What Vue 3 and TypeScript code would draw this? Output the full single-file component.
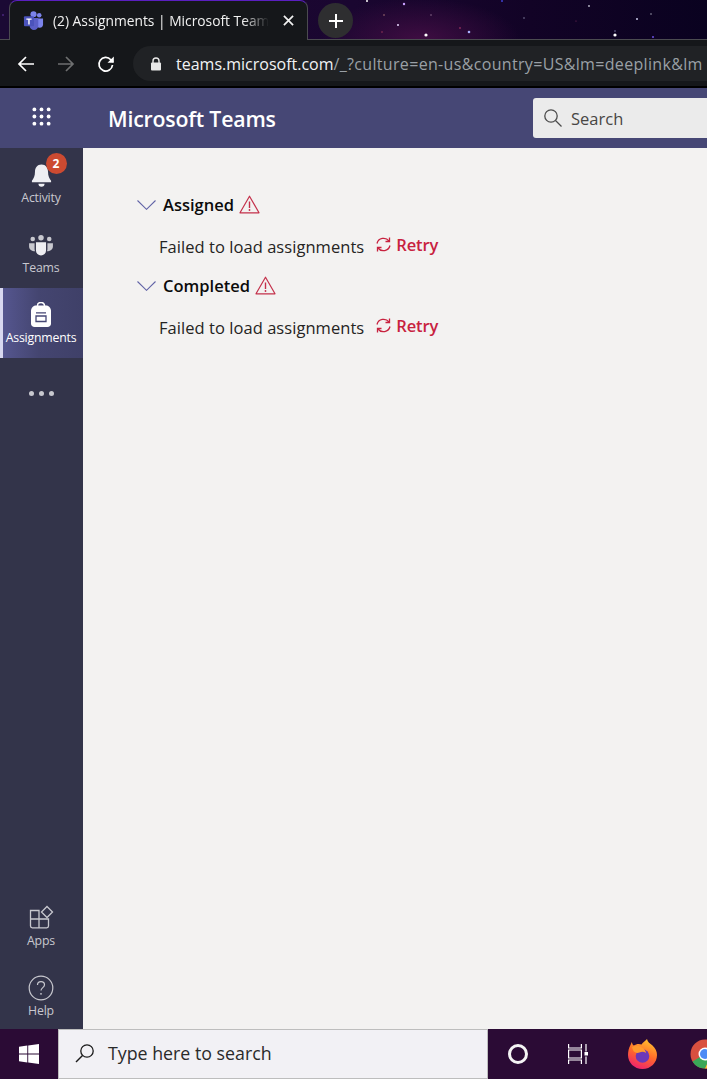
<template>
  <div class="screen">
    <header class="browser">
      <div class="tabstrip">
        <svg class="stars" width="707" height="40" viewBox="0 0 707 40">
          <circle v-for="s in stars" :key="s.x + '-' + s.y" :cx="s.x" :cy="s.y" :r="s.r" :fill="s.c" />
        </svg>
        <div class="tab">
          <svg class="tab-logo" width="21" height="21" viewBox="0 0 22 22">
            <circle cx="17" cy="5.5" r="2.4" fill="#7b83eb" />
            <path d="M14 9h7v6a3.500 3.500 0 0 1-7 0z" fill="#7b83eb" />
            <circle cx="11" cy="4.500" r="3.200" fill="#7b83eb" />
            <path d="M7 8.500h9v8a4.500 4.500 0 0 1-9 0z" fill="#5b5fc7" />
            <rect x="1" y="6.500" width="10.500" height="10.500" rx="1" fill="#4b53bc" />
            <path d="M3.500 9h5.500v1.300H7v5H5.500v-5h-2z" fill="#fff" />
          </svg>
          <span class="tab-title">(2) Assignments | Microsoft Team</span>
          <svg class="tab-close" width="11" height="11" viewBox="0 0 12 12">
            <path d="M1 1l10 10M11 1L1 11" stroke="#f1f1f1" stroke-width="1.900" fill="none" />
          </svg>
        </div>
        <button class="new-tab">
          <svg width="16" height="16" viewBox="0 0 16 16">
            <path d="M8 1v14M1 8h14" stroke="#fff" stroke-width="2" fill="none" />
          </svg>
        </button>
      </div>
      <div class="toolbar">
        <svg class="nav" width="18" height="18" viewBox="0 0 18 18">
          <path d="M17 9H2M9 2L2 9l7 7" stroke="#fff" stroke-width="1.700" fill="none" />
        </svg>
        <svg class="nav" width="18" height="18" viewBox="0 0 18 18">
          <path d="M1 9h15M9 2l7 7-7 7" stroke="#6e6f70" stroke-width="1.700" fill="none" />
        </svg>
        <svg class="nav" width="18" height="18" viewBox="0 0 18 18">
          <path d="M15.500 10a6.800 6.800 0 1 1-1.700-5.300L16 7" stroke="#fff" stroke-width="1.700" fill="none" />
          <path d="M16.800 1.500v6.300h-6.300z" fill="#fff" />
        </svg>
        <div class="omnibox">
          <svg class="lock" width="12" height="14" viewBox="0 0 12 14">
            <path d="M3 6V4a3 3 0 0 1 6 0v2" stroke="#e8e8e8" stroke-width="1.400" fill="none" />
            <rect x="1" y="5.500" width="10" height="8" rx="1" fill="#e8e8e8" />
          </svg>
          <span class="url"><b>teams.microsoft.com</b>/_?culture=en-us&amp;country=US&amp;lm=deeplink&amp;lm</span>
        </div>
      </div>
    </header>

    <div class="app-bar">
      <div class="waffle">
        <svg width="19" height="19" viewBox="0 0 20 20">
          <template v-for="y in [2.500, 10, 17.500]" :key="y">
            <circle v-for="x in [2.500, 10, 17.500]" :key="x" :cx="x" :cy="y" r="2" fill="#fff" />
          </template>
        </svg>
      </div>
      <div class="app-name">Microsoft Teams</div>
      <div class="search">
        <svg width="20" height="20" viewBox="0 0 20 20">
          <circle cx="8" cy="8" r="6.200" stroke="#4c4c4c" stroke-width="1.300" fill="none" />
          <path d="M12.500 12.500l6 6" stroke="#4c4c4c" stroke-width="1.300" fill="none" />
        </svg>
        <span>Search</span>
      </div>
    </div>

    <div class="app-body">
      <nav class="rail">
        <div class="rail-item">
          <div class="rail-icon">
            <svg width="23" height="25" viewBox="0 0 24 26">
              <path d="M12 1.500c-4.500 0-6.800 3.500-6.800 7.500 0 4.500-1.400 7-3.200 9.500v1.500h20v-1.500c-1.800-2.500-3.200-5-3.200-9.500 0-4-2.300-7.500-6.800-7.500z" fill="#eeeef2" />
              <path d="M8.800 21.500h6.400a3.200 3.200 0 0 1-6.400 0z" fill="#eeeef2" />
            </svg>
            <span class="badge">2</span>
          </div>
          <span class="rail-label">Activity</span>
        </div>
        <div class="rail-item">
          <div class="rail-icon">
            <svg width="26" height="22" viewBox="0 0 28 24">
              <circle cx="14" cy="4" r="3" fill="#c8c8cf" />
              <circle cx="5" cy="5.500" r="2.500" fill="#c8c8cf" />
              <circle cx="23" cy="5.500" r="2.500" fill="#c8c8cf" />
              <path d="M1 10h6v6.500c0 1 .3 1.700.8 2.400C4 19 1 16.500 1 13.500z" fill="#c8c8cf" />
              <path d="M27 10h-6v6.500c0 1-.3 1.700-.8 2.400 3.800.1 6.800-2.400 6.800-5.400z" fill="#c8c8cf" />
              <path d="M8.500 9h11v9a5.500 5.500 0 0 1-11 0z" fill="#eeeef2" />
            </svg>
          </div>
          <span class="rail-label">Teams</span>
        </div>
        <div class="rail-item active">
          <div class="rail-icon">
            <svg width="22" height="26" viewBox="0 0 22 26">
              <path d="M7.500 4.500V3.500a3.500 3 0 0 1 7 0v1" stroke="#fff" stroke-width="1.500" fill="none" />
              <path d="M6 3.500h10c3 0 5 2.500 5 5.500v12.500c0 2-1.500 3.500-3.500 3.500h-13c-2 0-3.500-1.500-3.500-3.500V9c0-3 2-5.500 5-5.500z" fill="#fff" />
              <path d="M6 10.800h10M6 14h10v5.500H6z" stroke="#464775" stroke-width="1.300" fill="none" />
            </svg>
          </div>
          <span class="rail-label">Assignments</span>
        </div>
        <div class="rail-more">
          <i></i><i></i><i></i>
        </div>
        <div class="rail-spacer"></div>
        <div class="rail-item low">
          <div class="rail-icon">
            <svg width="26" height="26" viewBox="0 0 26 26">
              <path d="M2.500 5.500h8.500v8.500h9.500v7c0 1-.8 1.800-1.800 1.800H4.300c-1 0-1.800-.8-1.800-1.800zM2.500 14h8.500v8.800M11 14v-2" stroke="#c8c8cf" stroke-width="1.300" fill="none" />
              <path d="M19 1.500l5.500 5.500-5.500 5.500-5.500-5.500z" stroke="#c8c8cf" stroke-width="1.300" fill="none" />
            </svg>
          </div>
          <span class="rail-label">Apps</span>
        </div>
        <div class="rail-item low">
          <div class="rail-icon">
            <svg width="26" height="26" viewBox="0 0 26 26">
              <circle cx="13" cy="13" r="11.800" stroke="#c8c8cf" stroke-width="1.200" fill="none" />
              <path d="M9.500 10c0-2 1.500-3.300 3.500-3.300s3.500 1.300 3.500 3.100c0 2.800-3.500 2.800-3.500 5.700" stroke="#c8c8cf" stroke-width="1.200" fill="none" />
              <circle cx="13" cy="18.800" r=".9" fill="#c8c8cf" />
            </svg>
          </div>
          <span class="rail-label">Help</span>
        </div>
      </nav>

      <main class="content">
        <section v-for="group in groups" :key="group" class="group">
          <div class="group-head">
            <svg class="chevron" width="19" height="10" viewBox="0 0 19 10">
              <path d="M.5 .5L9.500 9.300 18.500 .5" stroke="#6264a7" stroke-width="1.100" fill="none" />
            </svg>
            <span class="group-name">{{ group }}</span>
            <svg class="warn" width="21" height="19" viewBox="0 0 21 19">
              <path d="M10.500 1.200L20 17.800H1z" stroke="#c4314b" stroke-width="1.200" stroke-linejoin="round" fill="none" />
              <path d="M10.500 6.500v6.500" stroke="#c4314b" stroke-width="1.400" fill="none" />
              <circle cx="10.500" cy="15" r=".9" fill="#c4314b" />
            </svg>
          </div>
          <div class="group-error">
            <span class="error-text">Failed to load assignments</span>
            <a class="retry">
              <svg width="17" height="17" viewBox="0 0 17 17">
                <path d="M2 7.500A6.800 6.800 0 0 1 14 5M15 9.500A6.800 6.800 0 0 1 3 12" stroke="#c8223f" stroke-width="1.300" fill="none" />
                <path d="M14.500 1.500V5.500H10.500M2.500 15.500V11.500H6.500" stroke="#c8223f" stroke-width="1.300" fill="none" />
              </svg>
              <span>Retry</span>
            </a>
          </div>
        </section>
      </main>
    </div>

    <footer class="taskbar">
      <div class="start">
        <svg width="20" height="20" viewBox="0 0 20 20">
          <path d="M0 2.800L8.300 1.600V9.500H0zM9.200 1.500L20 0V9.500H9.200zM0 10.500H8.300V18.400L0 17.200zM9.200 10.500H20V20L9.200 18.500z" fill="#fff" />
        </svg>
      </div>
      <div class="win-search">
        <svg width="20" height="20" viewBox="0 0 20 20">
          <circle cx="12" cy="8" r="6.200" stroke="#1a1a1a" stroke-width="1.300" fill="none" />
          <path d="M7.500 12.500L1 19" stroke="#1a1a1a" stroke-width="1.500" fill="none" />
        </svg>
        <span>Type here to search</span>
      </div>
      <div class="tray">
        <span class="cortana"></span>
        <svg class="task-view" width="20" height="20" viewBox="0 0 20 20">
          <path d="M.6 0v4h12.800V0M.6 20v-4h12.800v4M.6 6h12.800v8H.6zM18 0v7.500M18 12.500V20" stroke="#fff" stroke-width="1.200" fill="none" />
          <rect x="16.500" y="8" width="3.500" height="3.500" fill="#fff" />
        </svg>
        <svg class="firefox" width="29" height="30" viewBox="0 0 29 30">
          <defs>
            <linearGradient id="ff-base" x1="0.700" y1="0" x2="0.300" y2="1">
              <stop offset="0" stop-color="#ffc22e" />
              <stop offset=".5" stop-color="#ff6a2a" />
              <stop offset="1" stop-color="#ee1f70" />
            </linearGradient>
          </defs>
          <path d="M19 0c.5 3 3 4.500 5.500 6.500 3 3 4.500 6 4.500 9.500 0 7.700-6.300 14-14.500 14S0 23.700 0 16c0-3.500 .8-7 2.500-10l1.300-3c.3 1.500 1 3 2 3.500C8 5 11 4.500 13.500 5.500 15 3.500 17 2 19 0z" fill="url(#ff-base)" />
          <circle cx="14.500" cy="17" r="6.800" fill="#6b38b8" />
          <path d="M4 8c3-1.500 6-2 9 0 3 1.500 5 4 5 6-2-1.500-4.500-1.500-6.500-.5-2.500 1-5 0-6-1.500-.7-1.300-1.300-2.700-1.500-4z" fill="#ff9a2e" />
        </svg>
        <svg class="chrome" width="30" height="30" viewBox="0 0 30 30">
          <circle cx="15" cy="15" r="14.500" fill="#d9503f" />
          <path d="M15 15L2.500 22.500A14.500 14.500 0 0 0 15 29.500L22 15z" fill="#3aa757" />
          <path d="M15 9h13.500A14.500 14.500 0 0 1 15 29.500L22 15z" fill="#fcc934" />
          <circle cx="15" cy="15" r="6.500" fill="#fff" />
          <circle cx="15" cy="15" r="5" fill="#4c8bf5" />
        </svg>
      </div>
    </footer>
  </div>
</template>

<script setup lang="ts">
interface Star {
  x: number
  y: number
  r: number
  c: string
}

const groups: string[] = ['Assigned', 'Completed']

const stars: Star[] = [
  { x: 3, y: 15, r: 0.8, c: '#6a3ab0' },
  { x: 367, y: 1, r: 1, c: '#fff' },
  { x: 404, y: 4, r: 1.2, c: '#c9a0ff' },
  { x: 384, y: 15, r: 0.8, c: '#a77' },
  { x: 398, y: 25, r: 1, c: '#e8d8ff' },
  { x: 382, y: 32, r: 0.7, c: '#b04060' },
  { x: 426, y: 35, r: 1.6, c: '#fff' },
  { x: 431, y: 15, r: 0.7, c: '#a080a0' },
  { x: 460, y: 28, r: 0.8, c: '#c04070' },
  { x: 469, y: 32, r: 1.3, c: '#aab0ff' },
  { x: 502, y: 1, r: 1, c: '#4040d0' },
  { x: 524, y: 18, r: 0.8, c: '#8080a0' },
  { x: 589, y: 6, r: 0.9, c: '#c0c0d0' },
  { x: 637, y: 19, r: 1, c: '#c8c8e8' },
  { x: 651, y: 14, r: 0.8, c: '#a0a0b0' },
  { x: 615, y: 31, r: 0.7, c: '#9090c0' },
  { x: 615, y: 35, r: 1.6, c: '#fff' },
  { x: 653, y: 37, r: 1, c: '#6a50e0' },
  { x: 576, y: 21, r: 0.6, c: '#803060' }
]
</script>

<style scoped>
.screen {
  width: 707px;
  height: 1079px;
  overflow: hidden;
  display: flex;
  flex-direction: column;
  background: #f3f2f1;
  font-family: "Open Sans", "Noto Sans", sans-serif;
}

.browser {
  height: 88px;
  background: #15171a;
  border-bottom: 2px solid #000;
  box-sizing: border-box;
  flex: none;
}

.tabstrip {
  position: relative;
  height: 40px;
  display: flex;
  align-items: flex-end;
  overflow: hidden;
  background:
    radial-gradient(ellipse 100px 42px at 420px 40px, #3f0d42 0%, rgba(63, 13, 66, 0) 100%),
    linear-gradient(90deg, #1b0a34 0%, #1a0630 50%, #120326 75%, #0a0220 100%);
  box-shadow: inset 0 -1px 0 #4b4b50;
}

.stars {
  position: absolute;
  left: 0;
  top: 0;
}

.tab {
  position: relative;
  margin-left: 9px;
  width: 299px;
  height: 40px;
  box-sizing: border-box;
  display: flex;
  align-items: center;
  padding: 0 13px 0 13px;
  gap: 9px;
  background: #15171a;
  border: 1px solid #4b4b50;
  border-top: 1px solid #5a1fc0;
  border-bottom: none;
  border-radius: 8px 8px 0 0;
}

.tab-logo {
  flex: none;
}

.tab-title {
  flex: 1;
  min-width: 0;
  overflow: hidden;
  white-space: nowrap;
  font-size: 13.8px;
  color: #f1f1f1;
  -webkit-mask-image: linear-gradient(90deg, #000 88%, transparent 100%);
  mask-image: linear-gradient(90deg, #000 88%, transparent 100%);
}

.tab-close {
  flex: none;
  margin-left: 5px;
}

.new-tab {
  position: relative;
  width: 35px;
  height: 35px;
  margin: 0 0 2px 10px;
  display: flex;
  align-items: center;
  justify-content: center;
  padding: 0;
  border: none;
  border-radius: 50%;
  background: #2e2e30;
}

.toolbar {
  height: 46px;
  display: flex;
  align-items: center;
  padding: 1px 0 0 17px;
  box-sizing: border-box;
}

.nav {
  flex: none;
  margin-right: 22px;
}

.omnibox {
  flex: 1;
  min-width: 0;
  height: 35px;
  margin-left: -4px;
  display: flex;
  align-items: center;
  gap: 14px;
  padding-left: 17px;
  background: #202225;
  border-radius: 18px 0 0 18px;
  overflow: hidden;
}

.lock {
  flex: none;
}

.url {
  white-space: nowrap;
  font-size: 16px;
  letter-spacing: 0.33px;
  color: #9aa0a6;
}

.url b {
  font-weight: 400;
  letter-spacing: 0;
  color: #f1f3f4;
}

.app-bar {
  height: 60px;
  flex: none;
  display: flex;
  align-items: center;
  background: #464775;
}

.waffle {
  width: 83px;
  height: 60px;
  flex: none;
  display: flex;
  align-items: center;
  justify-content: center;
  margin-top: -4px;
}

.app-name {
  margin-left: 25px;
  width: 425px;
  flex: none;
  font-size: 21.3px;
  font-weight: 600;
  color: #fff;
  letter-spacing: -0.2px;
  padding-top: 1px;
}

.search {
  flex: 1;
  height: 40px;
  display: flex;
  align-items: center;
  gap: 8px;
  padding-left: 10px;
  background: #ebebeb;
  border-radius: 3px 0 0 3px;
  font-size: 16.5px;
  color: #484644;
}

.app-body {
  flex: 1;
  min-height: 0;
  display: flex;
}

.rail {
  width: 83px;
  flex: none;
  display: flex;
  flex-direction: column;
  background: #33344a;
}

.rail-item {
  height: 70px;
  flex: none;
  box-sizing: border-box;
  display: flex;
  flex-direction: column;
  align-items: center;
  justify-content: flex-start;
  padding: 13px 1px 0 0;
  gap: 1px;
  color: #c8c8cf;
}

.rail-item.low {
  padding-top: 15px;
}

.rail-item.active {
  border-left: 3px solid #d8d8f0;
  background: linear-gradient(90deg, #55568f 0%, #444570 45%, #3f4068 100%);
  color: #fff;
  padding-right: 4px;
}

.rail-icon {
  position: relative;
  height: 28px;
  display: flex;
  align-items: center;
  justify-content: center;
}

.rail-label {
  font-size: 12.3px;
  line-height: 15px;
  letter-spacing: -0.2px;
}

.badge {
  position: absolute;
  left: 16px;
  top: -8px;
  width: 21px;
  height: 21px;
  border-radius: 50%;
  background: #cc4a31;
  color: #fff;
  font-size: 12px;
  font-weight: 700;
  line-height: 21px;
  text-align: center;
}

.rail-more {
  height: 70px;
  flex: none;
  display: flex;
  align-items: center;
  justify-content: center;
  padding-right: 1px;
  gap: 5px;
}

.rail-more i {
  width: 5px;
  height: 5px;
  border-radius: 50%;
  background: #c8c8cf;
}

.rail-spacer {
  flex: 1;
}

.content {
  flex: 1;
  padding: 43px 0 0 54px;
  background: #f3f2f1;
}

.group {
  display: flex;
  flex-direction: column;
}

.group-head {
  height: 27px;
  display: flex;
  align-items: center;
}

.chevron {
  flex: none;
  margin-right: 7px;
}

.group-name {
  font-size: 16.5px;
  font-weight: 600;
  letter-spacing: 0;
  color: #0b0b0b;
}

.warn {
  margin-left: 5px;
}

.group-error {
  height: 54px;
  display: flex;
  align-items: center;
  padding: 2px 0 0 22px;
  box-sizing: border-box;
}

.error-text {
  font-size: 16.5px;
  letter-spacing: 0.05px;
  color: #252423;
}

.retry {
  display: flex;
  align-items: center;
  gap: 4px;
  margin-left: 11px;
  margin-top: -3px;
  font-size: 16.5px;
  font-weight: 600;
  letter-spacing: -0.1px;
  color: #c8223f;
}

.taskbar {
  height: 50px;
  flex: none;
  display: flex;
  background: #2b0b35;
}

.start {
  width: 58px;
  flex: none;
  display: flex;
  align-items: center;
  justify-content: center;
}

.win-search {
  width: 430px;
  flex: none;
  box-sizing: border-box;
  display: flex;
  align-items: center;
  gap: 13px;
  padding: 0 0 2px 16px;
  background: #f2f1f5;
  border: 1px solid #bdbdbd;
  font-size: 17.8px;
  color: #2a2a2a;
}

.tray {
  flex: 1;
  min-width: 0;
  display: flex;
  align-items: center;
  padding-left: 20px;
  overflow: hidden;
}

.cortana {
  width: 20px;
  height: 20px;
  flex: none;
  box-sizing: border-box;
  border: 3px solid #f4f4f4;
  border-radius: 50%;
}

.task-view {
  flex: none;
  margin-left: 40px;
}

.firefox {
  flex: none;
  margin-left: 40px;
}

.chrome {
  flex: none;
  margin-left: 33px;
}
</style>
